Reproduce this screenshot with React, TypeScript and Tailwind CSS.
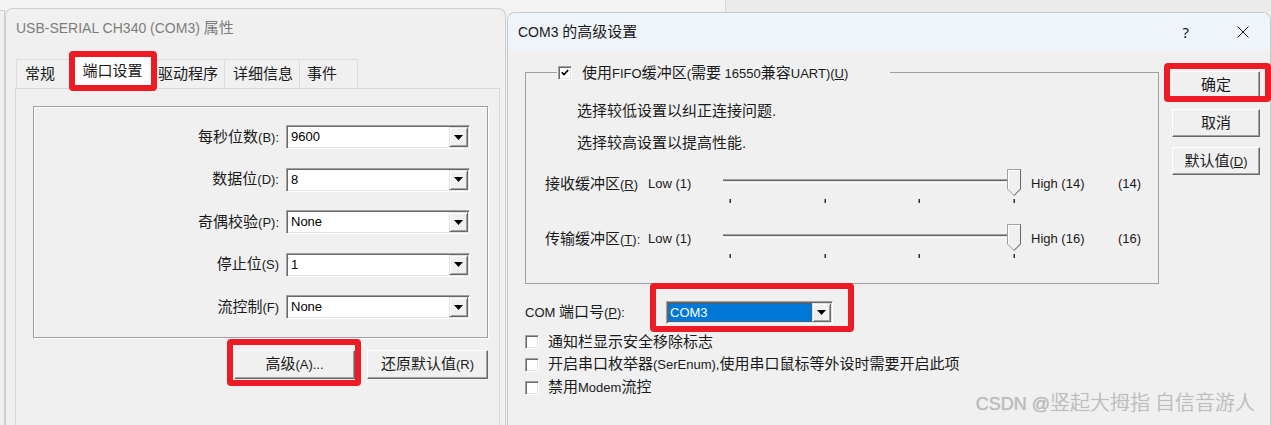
import React from "react";

const CJK_RE = /[\u2E80-\u9FFF\uFF00-\uFFEF\u3000-\u303F]/;

function M({ t, lat = "text-[13px]", cjk = "text-[15px]" }: { t: string; lat?: string; cjk?: string }) {
  const parts = t.split(/([\u2E80-\u9FFF\uFF00-\uFFEF\u3000-\u303F]+)/);
  return (
    <>
      {parts.map((p, i) =>
        p === "" ? null : (
          <span key={i} className={CJK_RE.test(p) ? cjk : lat}>
            {p}
          </span>
        )
      )}
    </>
  );
}

function DropBtn() {
  return (
    <div className="w-[19px] self-stretch flex items-center justify-center bg-[#f0f0f0] border border-t-[#e3e3e3] border-l-[#e3e3e3] border-r-[#696969] border-b-[#696969] shadow-[inset_1px_1px_0_#ffffff,inset_-1px_-1px_0_#a0a0a0]">
      <svg width="9" height="5" viewBox="0 0 9 5">
        <path d="M0 0H9L4.5 5Z" fill="#000" />
      </svg>
    </div>
  );
}

function Combo({ v }: { v: string }) {
  return (
    <div className="flex w-[184px] h-[24px] p-[1px] bg-white border border-t-[#a0a0a0] border-l-[#a0a0a0] border-r-[#ffffff] border-b-[#ffffff] shadow-[inset_1px_1px_0_#696969,inset_-1px_-1px_0_#e3e3e3]">
      <div className="flex-1 flex items-center pl-[3px] text-[13px] text-black">{v}</div>
      <DropBtn />
    </div>
  );
}

function Btn({ children, className }: { children: React.ReactNode; className: string }) {
  return (
    <div
      className={`flex items-center justify-center bg-[#f0f0f0] border border-t-[#ffffff] border-l-[#ffffff] border-r-[#696969] border-b-[#696969] shadow-[inset_-1px_-1px_0_#a0a0a0] text-[#1a1a1a] leading-[20px] ${className}`}
    >
      <span>{children}</span>
    </div>
  );
}

function Check({ checked }: { checked?: boolean }) {
  return (
    <div className="w-[14px] h-[14px] shrink-0 flex items-center justify-center bg-white border border-t-[#a0a0a0] border-l-[#a0a0a0] border-r-[#ffffff] border-b-[#ffffff] shadow-[inset_1px_1px_0_#696969,inset_-1px_-1px_0_#e3e3e3]">
      {checked && (
        <svg width="8" height="7" viewBox="0 0 8 7">
          <path d="M0.8 3.4L3 5.6L7.2 1" stroke="#000" strokeWidth="1.7" fill="none" />
        </svg>
      )}
    </div>
  );
}

function Slider() {
  return (
    <svg width="300" height="36" viewBox="0 0 300 36" className="shrink-0">
      <rect x="0" y="11" width="288" height="1" fill="#a0a0a0" />
      <rect x="0" y="12" width="288" height="1" fill="#696969" />
      <rect x="0" y="13" width="288" height="1" fill="#e3e3e3" />
      <rect x="0" y="14" width="288" height="1" fill="#ffffff" />
      {[7, 102, 196, 291].map((x) => (
        <rect key={x} x={x - 0.5} y="31" width="1.5" height="4" fill="#303030" />
      ))}
      <path d="M284.5 1.5H297.5V21L291 27.5L284.5 21Z" fill="#f0f0f0" stroke="#a0a0a0" />
      <path d="M285.5 21V2.5H296.5" fill="none" stroke="#ffffff" />
      <path d="M297.5 1.5V21L291 27.5" fill="none" stroke="#696969" />
    </svg>
  );
}

function Red({ className }: { className: string }) {
  return <div className={`absolute border-[6px] border-[#ed1c24] rounded-[4px] pointer-events-none ${className}`} />;
}

function FieldRow({ label, v }: { label: React.ReactNode; v: string }) {
  return (
    <div className="flex items-center justify-end gap-[7px] h-[24px]">
      <div className="leading-[20px] text-[#1a1a1a]">{label}</div>
      <Combo v={v} />
    </div>
  );
}

function SliderRow({ label, high, val }: { label: React.ReactNode; high: string; val: string }) {
  return (
    <div className="flex items-start pl-[19px] h-[36px]">
      <div className="w-[103px] mt-[6px] leading-[20px]">{label}</div>
      <div className="w-[75px] mt-[6px] leading-[20px] text-[13px]">Low (1)</div>
      <Slider />
      <div className="ml-[8px] w-[87px] mt-[6px] leading-[20px] text-[13px]">{high}</div>
      <div className="mt-[6px] leading-[20px] text-[13px]">{val}</div>
    </div>
  );
}

export default function App() {
  return (
    <div className="relative w-[1271px] h-[425px] overflow-hidden bg-[#f3f3f3] text-[#1a1a1a] font-['Liberation_Sans','Noto_Sans_CJK_SC',sans-serif]">
      {/* windows behind */}
      <div className="absolute left-[-10px] top-[10px] w-[15px] h-[420px] bg-[#f0f0f0] border border-[#cfcfcf]" />
      <div className="absolute left-[725px] top-0 h-[12px] w-px bg-[#d6d6d6]" />
      <div className="absolute left-[726px] top-0 h-[12px] w-[545px] bg-[#ebebeb]" />

      {/* Left window: properties */}
      <div className="absolute left-[5px] top-[8px] w-[501px] h-[420px] bg-[#f0f0f0] border-l border-t border-r border-[#cfcfcf] rounded-tl-[8px] rounded-tr-[8px] flex flex-col">
        <div className="h-[37px] shrink-0 flex items-center pl-[10px] text-[#7d7d7d] leading-[20px]">
          <span>
            <M t="USB-SERIAL CH340 (COM3) 属性" lat="text-[14px]" cjk="text-[15px]" />
          </span>
        </div>
        <div className="h-[42px] shrink-0 flex items-end pl-[10px] text-[15px] leading-[20px]">
          <div className="w-[54px] h-[29px] flex items-center pl-[8px] bg-[#f0f0f0] border-l border-t border-[#dcdcdc]">常规</div>
          <div className="relative z-10 w-[85px] h-[33px] flex items-center justify-center bg-[#ffffff] border-l border-t border-r border-[#dcdcdc] pb-[3px]">
            端口设置
            <Red className="left-[-2px] right-[-3px] top-[-5px] bottom-[-3px]" />
          </div>
          <div className="w-[70px] h-[29px] flex items-center pl-[3px] bg-[#f0f0f0] border-t border-r border-[#dcdcdc]">驱动程序</div>
          <div className="w-[75px] h-[29px] flex items-center pl-[8px] bg-[#f0f0f0] border-t border-r border-[#dcdcdc]">详细信息</div>
          <div className="w-[58px] h-[29px] flex items-center pl-[7px] bg-[#f0f0f0] border-t border-r border-[#dcdcdc]">事件</div>
        </div>
        <div className="ml-[9px] w-[485px] flex-1 border-l border-t border-r border-[#d9d9d9] bg-[#f0f0f0] pt-[17px] pl-[17px]">
          <div className="w-[455px] border border-[#a0a0a0] shadow-[1px_1px_0_#ffffff,inset_1px_1px_0_#ffffff] pt-[18px] pb-[18px] pr-[17px] flex flex-col gap-[18.5px]">
            <FieldRow label={<M t="每秒位数(B):" />} v="9600" />
            <FieldRow label={<M t="数据位(D):" />} v="8" />
            <FieldRow label={<M t="奇偶校验(P):" />} v="None" />
            <FieldRow label={<M t="停止位(S)" />} v="1" />
            <FieldRow label={<M t="流控制(F)" />} v="None" />
          </div>
          <div className="w-[455px] mt-[12px] flex justify-end gap-[12px]">
            <div className="relative">
              <Btn className="w-[121px] h-[29px]">
                <M t="高级(A)..." />
              </Btn>
              <Red className="left-[-7px] right-[-6px] top-[-11px] bottom-[-7px]" />
            </div>
            <Btn className="w-[121px] h-[29px]">
              <M t="还原默认值(R)" />
            </Btn>
          </div>
        </div>
      </div>

      {/* Right window: advanced settings */}
      <div className="absolute left-[507px] top-[12px] w-[764px] h-[420px] bg-[#f0f0f0] border-l border-t border-r border-[#c9c9c9] rounded-tl-[8px] rounded-tr-[8px] flex flex-col">
        <div className="h-[37px] shrink-0 flex items-center justify-between pl-[10px] pr-[21px] bg-[#eef4f9] rounded-tl-[7px] rounded-tr-[7px] leading-[20px]">
          <span>
            <M t="COM3 的高级设置" lat="text-[14px]" cjk="text-[15px]" />
          </span>
          <div className="flex items-center gap-[48px]">
            <span className="text-[15px] font-['Noto_Sans',sans-serif] text-[#1a1a1a]">?</span>
            <svg width="12" height="12" viewBox="0 0 12 12">
              <path d="M0.5 0.5L11.5 11.5M11.5 0.5L0.5 11.5" stroke="#1a1a1a" strokeWidth="1" />
            </svg>
          </div>
        </div>

        <div className="flex flex-1 pl-[17px]">
          <div className="w-[634px] flex flex-col">
            <fieldset className="mt-[15px] w-[634px] m-0 px-0 pt-[21px] pb-[24px] border border-[#a0a0a0] min-w-0">
              <legend className="ml-[31px] pl-[1px] pr-[42px] h-[15px] p-0">
                <span className="flex items-center gap-[10px] h-[15px] leading-[15px]">
                  <Check checked />
                  <span>
                    <M t="使用FIFO缓冲区(需要 16550兼容UART)(" />
                    <span className="text-[13px] underline">U</span>
                    <M t=")" />
                  </span>
                </span>
              </legend>
              <div className="pl-[51px] leading-[20px] text-[15px]">选择较低设置以纠正连接问题.</div>
              <div className="pl-[51px] mt-[12px] leading-[20px] text-[15px]">选择较高设置以提高性能.</div>
              <div className="mt-[15px]">
                <SliderRow
                  label={
                    <>
                      <M t="接收缓冲区(" />
                      <span className="text-[13px] underline">R</span>
                      <M t=")" />
                    </>
                  }
                  high="High (14)"
                  val="(14)"
                />
              </div>
              <div className="mt-[19px]">
                <SliderRow
                  label={
                    <>
                      <M t="传输缓冲区(" />
                      <span className="text-[13px] underline">T</span>
                      <M t="):" />
                    </>
                  }
                  high="High (16)"
                  val="(16)"
                />
              </div>
            </fieldset>

            <div className="mt-[17px] flex items-center h-[23px]">
              <div className="w-[141px] leading-[20px]">
                <M t="COM 端口号(" />
                <span className="text-[13px] underline">P</span>
                <M t="):" />
              </div>
              <div className="relative">
                <div className="flex w-[167px] h-[23px] p-[1px] bg-white border border-t-[#a0a0a0] border-l-[#a0a0a0] border-r-[#ffffff] border-b-[#ffffff] shadow-[inset_1px_1px_0_#696969,inset_-1px_-1px_0_#e3e3e3]">
                  <div className="flex-1 flex items-center pl-[1px] text-[13px] text-white bg-[#0078d7] border border-dotted border-[#7a4f2a]">COM3</div>
                  <DropBtn />
                </div>
                <Red className="left-[-16px] right-[-21px] top-[-18px] bottom-[-8px]" />
              </div>
            </div>

            <div className="mt-[6px] flex flex-col">
              <div className="h-[23px] flex items-center gap-[9px] leading-[20px]">
                <Check />
                <span>
                  <M t="通知栏显示安全移除标志" />
                </span>
              </div>
              <div className="h-[23px] flex items-center gap-[9px] leading-[20px]">
                <Check />
                <span>
                  <M t="开启串口枚举器(SerEnum),使用串口鼠标等外设时需要开启此项" />
                </span>
              </div>
              <div className="h-[23px] flex items-center gap-[9px] leading-[20px]">
                <Check />
                <span>
                  <M t="禁用Modem流控" />
                </span>
              </div>
            </div>
          </div>

          <div className="ml-[13px] pt-[21px] flex flex-col gap-[10px]">
            <div className="relative">
              <Btn className="w-[88px] h-[28px]">
                <M t="确定" />
              </Btn>
              <Red className="left-[-8px] right-[-11px] top-[-8px] bottom-[-3px]" />
            </div>
            <Btn className="w-[88px] h-[28px]">
              <M t="取消" />
            </Btn>
            <Btn className="w-[88px] h-[28px]">
              <M t="默认值(" />
              <span className="text-[13px] underline">D</span>
              <M t=")" />
            </Btn>
          </div>
        </div>
      </div>

      {/* watermark */}
      <div className="absolute right-[16px] bottom-[8px] leading-[24px] font-light text-[#bcbcbc] [text-shadow:0_0_1px_rgba(0,0,0,0.22)]">
        <M t="CSDN @竖起大拇指 自信音游人" lat="text-[18px]" cjk="text-[20px]" />
      </div>
    </div>
  );
}
